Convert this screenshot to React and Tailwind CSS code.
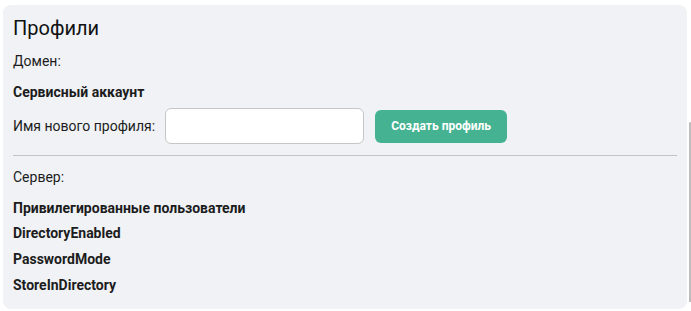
import React from 'react';

const items = ['DirectoryEnabled', 'PasswordMode', 'StoreInDirectory'];

const App = () => {
  const [name, setName] = React.useState('');

  return (
    <div
      className="relative w-[691px] h-[311px] bg-white overflow-hidden text-[#1c1c1c]"
      style={{ fontFamily: 'Roboto, "Liberation Sans", sans-serif' }}
    >
      <div className="ml-[3px] mt-[5px] w-[684px] h-[304px] rounded-[8px] bg-[#f0f2f6] px-[10px] pt-[9px]">
        <h2 className="text-[20px] leading-[28px] font-normal text-[#111]">Профили</h2>

        <div className="mt-[9px] text-[14px] leading-[20px]">Домен:</div>
        <div className="mt-[11px] text-[14px] leading-[20px] font-bold">Сервисный аккаунт</div>

        <div className="mt-[6px] flex items-center">
          <label className="text-[14px] leading-[20px] mr-[10px]">Имя нового профиля:</label>
          <input
            value={name}
            onChange={(e) => setName(e.target.value)}
            className="w-[199px] h-[36px] rounded-[6px] border border-[#c6c6c8] bg-white px-2 text-[14px] outline-none"
          />
          <button className="ml-[11px] w-[132px] h-[33px] rounded-[6px] bg-[#45b291] text-white text-[12px] font-bold">
            Создать профиль
          </button>
        </div>

        <div className="mt-[11px] h-px bg-[#c3c3c6]"></div>

        <div className="mt-[11px] text-[14px] leading-[20px]">Сервер:</div>
        <div className="mt-[11px] text-[14px] leading-[20px] font-bold">Привилегированные пользователи</div>
        {items.map((item, i) => (
          <div
            key={item}
            className={
              i === 0
                ? 'mt-[5px] text-[14px] leading-[20px] font-bold'
                : 'mt-[6px] text-[14px] leading-[20px] font-bold'
            }
          >
            {item}
          </div>
        ))}
      </div>

      {/* page scrollbar thumb */}
      <div className="absolute left-[689px] top-[122px] w-[2px] h-[180px] rounded-t-[2px] bg-[#bdbdbd]"></div>
    </div>
  );
};

export default App;
